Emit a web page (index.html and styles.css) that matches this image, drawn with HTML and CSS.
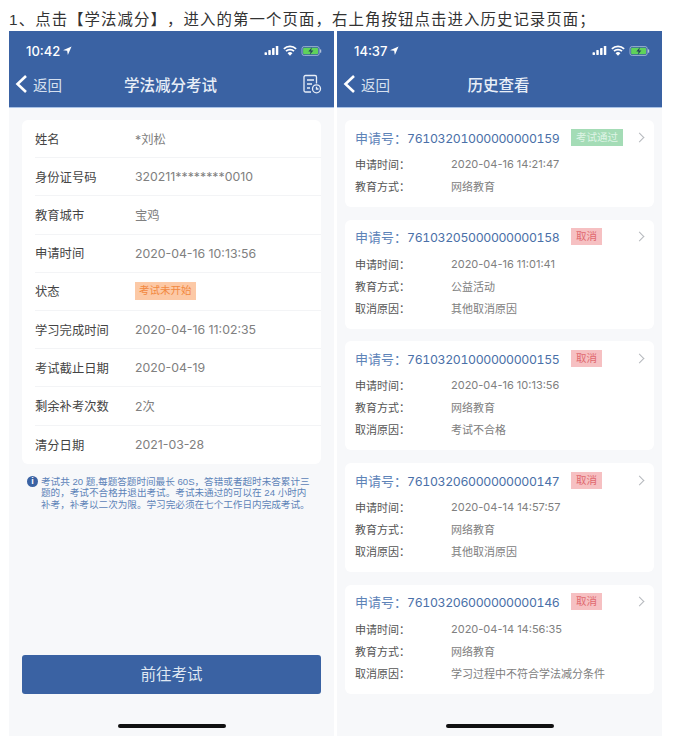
FILE: index.html
```html
<!DOCTYPE html>
<html lang="zh-CN">
<head>
    <meta charset="UTF-8">
    <meta name="viewport" content="width=device-width, initial-scale=1.0">
    <title>学法减分</title>
    <link rel="stylesheet" href="styles.css">
</head>
<body>
    <p class="intro">1、点击【学法减分】，进入的第一个页面，右上角按钮点击进入历史记录页面；</p>
    <div class="phones">
        <div class="phone">
            <div class="header">
                <div class="status">
                    <span class="time">10:42</span>
                    <svg class="arrow" viewBox="0 0 10 10"><path d="M9.5.5 0 4.6l4.6.8.8 4.6z"/></svg>
                    <span class="status-right">
                        <svg class="signal" viewBox="0 0 17 11"><rect x="0" y="7.5" width="3" height="3.5" rx=".6"/><rect x="4.6" y="5" width="3" height="6" rx=".6"/><rect x="9.2" y="2.5" width="3" height="8.5" rx=".6"/><rect x="13.8" y="0" width="3" height="11" rx=".6"/></svg>
                        <svg class="wifi" viewBox="0 0 16 12"><path d="M1 4.2a10 10 0 0 1 14 0M3.4 6.8a6.6 6.6 0 0 1 9.2 0" fill="none" stroke="#fff" stroke-width="2"/><path d="M8 12 5.200 9a4 4 0 0 1 5.600 0z" fill="#fff"/></svg>
                        <svg class="battery" viewBox="0 0 22 11"><rect x=".5" y=".5" width="19" height="10" rx="2.5" fill="none" stroke="#b7c6dc" stroke-width=".8"/><rect x="1.8" y="1.8" width="16.4" height="7.4" rx="1.2" fill="#5fd35a"/><rect x="20.4" y="3.6" width="1.3" height="3.8" rx=".6" fill="#b7c6dc"/><path d="M11.5 1.500 7.500 6h2.600l-1 3.500 4-4.500h-2.600z" fill="#24415f"/></svg>
                    </span>
                </div>
                <div class="nav">
                    <span class="back"><svg class="chevron" viewBox="0 0 12 20"><path d="M11 2 2.500 10 11 18" fill="none" stroke="#fff" stroke-width="2.600"/></svg>返回</span>
                    <span class="nav-title">学法减分考试</span>
                    <svg class="history" viewBox="0 0 20 20" fill="none" stroke="#e8eef7" stroke-width="1.300"><path d="M9 18H3.500A1.500 1.500 0 0 1 2 16.500V3A1.500 1.500 0 0 1 3.500 1.500H13A1.500 1.500 0 0 1 14.500 3V9.500"/><path d="M5 6h7M5 10h5M5 14h3"/><circle cx="14.500" cy="14.800" r="4"/><path d="M14.500 12.800v2.200h2"/></svg>
                </div>
            </div>
            <div class="page">
                <div class="card info">
                    <div class="row"><span class="label">姓名</span><span class="value">*刘松</span></div>
                    <div class="row"><span class="label">身份证号码</span><span class="value">320211********0010</span></div>
                    <div class="row"><span class="label">教育城市</span><span class="value">宝鸡</span></div>
                    <div class="row"><span class="label">申请时间</span><span class="value">2020-04-16 10:13:56</span></div>
                    <div class="row"><span class="label">状态</span><span class="value"><span class="tag tag-orange">考试未开始</span></span></div>
                    <div class="row"><span class="label">学习完成时间</span><span class="value">2020-04-16 11:02:35</span></div>
                    <div class="row"><span class="label">考试截止日期</span><span class="value">2020-04-19</span></div>
                    <div class="row"><span class="label">剩余补考次数</span><span class="value">2次</span></div>
                    <div class="row"><span class="label">清分日期</span><span class="value">2021-03-28</span></div>
                </div>
                <div class="notice">
                    <span class="notice-icon">i</span>
                    <p>考试共 20 题,每题答题时间最长 60S，答错或者超时未答累计三题的，考试不合格并退出考试。考试未通过的可以在 24 小时内补考，补考以二次为限。学习完必须在七个工作日内完成考试。</p>
                </div>
                <div class="button">前往考试</div>
            </div>
            <div class="home-bar"></div>
        </div>

        <div class="phone">
            <div class="header">
                <div class="status">
                    <span class="time">14:37</span>
                    <svg class="arrow" viewBox="0 0 10 10"><path d="M9.5.5 0 4.6l4.6.8.8 4.6z"/></svg>
                    <span class="status-right">
                        <svg class="signal" viewBox="0 0 17 11"><rect x="0" y="7.5" width="3" height="3.5" rx=".6"/><rect x="4.6" y="5" width="3" height="6" rx=".6"/><rect x="9.2" y="2.5" width="3" height="8.5" rx=".6"/><rect x="13.8" y="0" width="3" height="11" rx=".6"/></svg>
                        <svg class="wifi" viewBox="0 0 16 12"><path d="M1 4.2a10 10 0 0 1 14 0M3.4 6.8a6.6 6.6 0 0 1 9.2 0" fill="none" stroke="#fff" stroke-width="2"/><path d="M8 12 5.200 9a4 4 0 0 1 5.600 0z" fill="#fff"/></svg>
                        <svg class="battery" viewBox="0 0 22 11"><rect x=".5" y=".5" width="19" height="10" rx="2.5" fill="none" stroke="#b7c6dc" stroke-width=".8"/><rect x="1.8" y="1.8" width="16.4" height="7.4" rx="1.2" fill="#5fd35a"/><rect x="20.4" y="3.6" width="1.3" height="3.8" rx=".6" fill="#b7c6dc"/><path d="M11.5 1.500 7.500 6h2.600l-1 3.500 4-4.500h-2.600z" fill="#24415f"/></svg>
                    </span>
                </div>
                <div class="nav">
                    <span class="back"><svg class="chevron" viewBox="0 0 12 20"><path d="M11 2 2.500 10 11 18" fill="none" stroke="#fff" stroke-width="2.600"/></svg>返回</span>
                    <span class="nav-title">历史查看</span>
                </div>
            </div>
            <div class="page history-page">
                <div class="card record">
                    <div class="record-head"><span class="record-no">申请号：<b>76103201000000000159</b></span><span class="tag tag-green">考试通过</span><span class="more"></span></div>
                    <div class="line"><span class="line-label">申请时间：</span><span class="line-value">2020-04-16 14:21:47</span></div>
                    <div class="line"><span class="line-label">教育方式：</span><span class="line-value">网络教育</span></div>
                </div>
                <div class="card record">
                    <div class="record-head"><span class="record-no">申请号：<b>76103205000000000158</b></span><span class="tag tag-red">取消</span><span class="more"></span></div>
                    <div class="line"><span class="line-label">申请时间：</span><span class="line-value">2020-04-16 11:01:41</span></div>
                    <div class="line"><span class="line-label">教育方式：</span><span class="line-value">公益活动</span></div>
                    <div class="line"><span class="line-label">取消原因：</span><span class="line-value">其他取消原因</span></div>
                </div>
                <div class="card record">
                    <div class="record-head"><span class="record-no">申请号：<b>76103201000000000155</b></span><span class="tag tag-red">取消</span><span class="more"></span></div>
                    <div class="line"><span class="line-label">申请时间：</span><span class="line-value">2020-04-16 10:13:56</span></div>
                    <div class="line"><span class="line-label">教育方式：</span><span class="line-value">网络教育</span></div>
                    <div class="line"><span class="line-label">取消原因：</span><span class="line-value">考试不合格</span></div>
                </div>
                <div class="card record">
                    <div class="record-head"><span class="record-no">申请号：<b>76103206000000000147</b></span><span class="tag tag-red">取消</span><span class="more"></span></div>
                    <div class="line"><span class="line-label">申请时间：</span><span class="line-value">2020-04-14 14:57:57</span></div>
                    <div class="line"><span class="line-label">教育方式：</span><span class="line-value">网络教育</span></div>
                    <div class="line"><span class="line-label">取消原因：</span><span class="line-value">其他取消原因</span></div>
                </div>
                <div class="card record">
                    <div class="record-head"><span class="record-no">申请号：<b>76103206000000000146</b></span><span class="tag tag-red">取消</span><span class="more"></span></div>
                    <div class="line"><span class="line-label">申请时间：</span><span class="line-value">2020-04-14 14:56:35</span></div>
                    <div class="line"><span class="line-label">教育方式：</span><span class="line-value">网络教育</span></div>
                    <div class="line"><span class="line-label">取消原因：</span><span class="line-value">学习过程中不符合学法减分条件</span></div>
                </div>
            </div>
            <div class="home-bar"></div>
        </div>
    </div>
</body>
</html>
```
FILE: styles.css
```css
* {
    margin: 0;
    padding: 0;
    box-sizing: border-box;
}

body {
    font-family: Inter, "Noto Sans CJK SC", sans-serif;
    background-color: #fff;
    color: #333;
    padding: 9px 9px 0;
    text-spacing-trim: space-all;
}

.intro {
    font-family: "Liberation Sans", "Noto Sans CJK TC", sans-serif;
    font-size: 15.400px;
    line-height: 22px;
    letter-spacing: 1.100px;
    color: #333;
    white-space: nowrap;
}

.phones {
    display: flex;
    gap: 3px;
}

.phone {
    width: 325px;
    height: 705px;
    display: flex;
    flex-direction: column;
    background-color: #f7f8fa;
}

.header {
    height: 77px;
    flex: none;
    background-color: #3a62a3;
    color: #fff;
    border-bottom: 1px solid #a9c2e6;
}

.status {
    display: flex;
    align-items: center;
    height: 30px;
    padding: 9px 12px 0 17px;
}

.time {
    font-size: 13px;
    font-weight: 500;
}

.arrow {
    width: 9px;
    height: 9px;
    margin-left: 3px;
    fill: #fff;
}

.status-right {
    margin-left: auto;
    display: flex;
    align-items: center;
    gap: 4px;
}

.signal {
    width: 15px;
    height: 9px;
    fill: #fff;
}

.wifi {
    width: 14px;
    height: 11px;
}

.battery {
    width: 21px;
    height: 10px;
}

.nav {
    position: relative;
    display: flex;
    align-items: center;
    justify-content: space-between;
    height: 46px;
    padding: 0 12px 0 6px;
}

.back {
    display: flex;
    align-items: center;
    gap: 6px;
    font-size: 14.500px;
    color: #d6e0ef;
}

.chevron {
    width: 12px;
    height: 20px;
}

.nav-title {
    position: absolute;
    left: 0;
    right: 2px;
    text-align: center;
    font-size: 15.500px;
    font-weight: 500;
    color: #e8eef7;
}

.history {
    width: 20px;
    height: 20px;
}

.page {
    flex: 1;
    padding: 12px 13px 0;
    display: flex;
    flex-direction: column;
}

.card {
    background-color: #fff;
    border-radius: 6px;
}

.info {
    padding-left: 13px;
}

.row {
    display: flex;
    align-items: center;
    height: 38.200px;
    font-size: 12.300px;
    border-bottom: 1px solid #f3f4f6;
}

.row:last-child {
    border-bottom: none;
}

.label {
    width: 100px;
    color: #444;
}

.value {
    color: #808080;
}

.tag {
    display: inline-block;
    font-size: 10.500px;
    line-height: 18px;
    padding: 0 4px;
}

.tag-orange {
    background-color: #fcc9a6;
    color: #f2883f;
}

.tag-green {
    background-color: #a4dcb6;
    color: #dff4e6;
}

.tag-red {
    background-color: #f6c0c2;
    color: #e0686e;
}

.notice {
    display: flex;
    gap: 3px;
    padding: 12px 9px 0 5px;
    color: #5d83b8;
    font-family: "Liberation Sans", "Noto Sans CJK SC", sans-serif;
    font-size: 9.600px;
    line-height: 11.500px;
}

.notice-icon {
    flex: none;
    width: 11px;
    height: 11px;
    border-radius: 50%;
    background-color: #3a62a3;
    color: #fff;
    text-align: center;
    font-size: 9px;
    line-height: 11px;
    font-weight: 700;
}

.button {
    margin-top: auto;
    margin-bottom: 30px;
    height: 39px;
    line-height: 39px;
    text-align: center;
    background-color: #3a62a3;
    border-radius: 3px;
    color: #dfe7f2;
    font-size: 15.500px;
}

.home-bar {
    flex: none;
    width: 108px;
    height: 4px;
    margin: 0 auto 8px;
    border-radius: 2px;
    background-color: #111;
}

.history-page {
    padding: 12px 8px 0;
    gap: 12.700px;
}

.record {
    padding: 8px 8px 10px 10px;
}

.record-head {
    display: flex;
    align-items: center;
    height: 18px;
    margin-bottom: 7px;
}

.record-no {
    flex: none;
    width: 216px;
    font-size: 13px;
    color: #5d83b8;
    white-space: nowrap;
}

.record-no b {
    font-size: 12.300px;
    font-variant-numeric: tabular-nums;
    letter-spacing: -.35px;
    font-weight: 400;
    color: #4a70a8;
}

.record-head .tag {
    line-height: 17px;
    padding: 0 5px;
}

.more {
    width: 7px;
    height: 7px;
    margin-left: auto;
    margin-right: 3px;
    border-top: 1px solid #b5b8bd;
    border-right: 1px solid #b5b8bd;
    transform: rotate(45deg);
}

.line {
    display: flex;
    align-items: center;
    height: 22px;
    font-size: 11px;
}

.line-label {
    width: 96px;
    color: #555;
}

.line-value {
    color: #808080;
}
```
